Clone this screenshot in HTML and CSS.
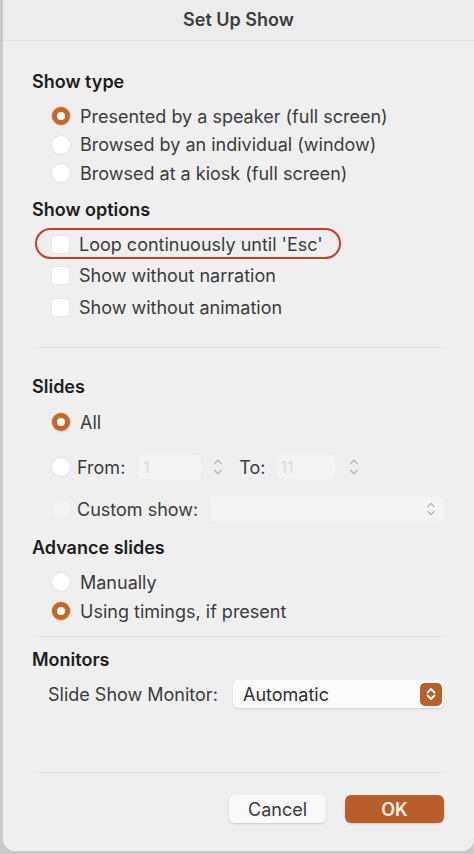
FILE: index.html
```html
<!DOCTYPE html>
<html>
<head>
  <meta charset="utf-8">
  <title>Set Up Show</title>
  <link rel="stylesheet" href="styles.css">
</head>
<body>
  <div class="win">
    <div class="win-title">Set Up Show</div>
    <div class="win-body">

      <div class="group">
        <div class="group-head">Show type</div>
        <div class="opts opts-radio">
          <label class="opt"><span class="radio on"></span>Presented by a speaker (full screen)</label>
          <label class="opt"><span class="radio"></span>Browsed by an individual (window)</label>
          <label class="opt"><span class="radio"></span>Browsed at a kiosk (full screen)</label>
        </div>
      </div>

      <div class="group group-opts">
        <div class="group-head">Show options</div>
        <div class="opts opts-check">
          <label class="opt opt-mark"><span class="check"></span>Loop continuously until 'Esc'<span class="ring"></span></label>
          <label class="opt"><span class="check"></span>Show without narration</label>
          <label class="opt"><span class="check"></span>Show without animation</label>
        </div>
      </div>

      <div class="sep sep-1"></div>

      <div class="group">
        <div class="group-head">Slides</div>
        <div class="slides">
          <label class="opt"><span class="radio on"></span>All</label>
          <div class="opt opt-range">
            <span class="radio"></span>From:
            <span class="field field-num">1</span>
            <span class="step"><svg width="10" height="22" viewBox="0 0 10 22"><path d="M1.5 8 5 4 8.5 8M1.5 14 5 18 8.5 14" fill="none" stroke="#b9b9b9" stroke-width="1.3"/></svg></span>
            <span class="to">To:</span>
            <span class="field field-num field-to">11</span>
            <span class="step step-to"><svg width="10" height="22" viewBox="0 0 10 22"><path d="M1.5 8 5 4 8.5 8M1.5 14 5 18 8.5 14" fill="none" stroke="#b9b9b9" stroke-width="1.3"/></svg></span>
          </div>
          <div class="opt opt-custom">
            <span class="radio faint"></span>Custom show:
            <span class="field field-pop"><svg width="10" height="18" viewBox="0 0 10 18"><path d="M1.5 7 5 3.5 8.5 7M1.5 11 5 14.5 8.5 11" fill="none" stroke="#b9b9b9" stroke-width="1.3"/></svg></span>
          </div>
        </div>
      </div>

      <div class="group group-adv">
        <div class="group-head">Advance slides</div>
        <div class="opts opts-radio opts-adv">
          <label class="opt"><span class="radio"></span>Manually</label>
          <label class="opt"><span class="radio on"></span>Using timings, if present</label>
        </div>
      </div>

      <div class="sep sep-2"></div>

      <div class="group">
        <div class="group-head">Monitors</div>
        <div class="monitor">
          <span class="monitor-label">Slide Show Monitor:</span>
          <span class="popup">Automatic
            <span class="popup-btn"><svg width="12" height="18" viewBox="0 0 12 18"><path d="M2.5 7.5 6 4 9.5 7.5M2.5 10.5 6 14 9.5 10.5" fill="none" stroke="#fff" stroke-width="1.8" stroke-linecap="round" stroke-linejoin="round"/></svg></span>
          </span>
        </div>
      </div>

      <div class="sep sep-3"></div>

      <div class="buttons">
        <button class="btn">Cancel</button>
        <button class="btn btn-ok">OK</button>
      </div>
    </div>
  </div>
</body>
</html>
```

FILE: styles.css
```css
html,
body {
  margin: 0;
  padding: 0;
}
body {
  width: 474px;
  height: 854px;
  background: #c9c9c9;
  font-family: Inter, "Liberation Sans", sans-serif;
  color: #3b3b3b;
  overflow: hidden;
}
.win {
  margin-left: 3px;
  width: 471px;
  height: 851px;
  background: #efefef;
  border-radius: 0 0 12px 12px;
  box-sizing: border-box;
}
.win-title {
  height: 40px;
  line-height: 40px;
  text-align: center;
  font-size: 18px;
  font-weight: 600;
  color: #3d3d3d;
  background: #ececec;
  border-bottom: 1px solid #e0e0e0;
}
.win-body {
  padding: 29px 30px 0 29px;
}
.group-head {
  font-size: 18px;
  font-weight: 600;
  color: #1d1d1d;
  height: 24px;
  line-height: 24px;
}
.opts {
  display: flex;
  flex-direction: column;
  padding-left: 20px;
}
.opts-radio {
  margin-top: 11px;
  gap: 6.5px;
}
.opts-adv {
  margin-top: 11px;
  gap: 7px;
}
.opt {
  display: flex;
  align-items: center;
  gap: 10px;
  height: 22px;
  font-size: 18px;
  color: #3c3c3c;
  white-space: nowrap;
  position: relative;
}
.radio {
  width: 18px;
  height: 18px;
  border-radius: 50%;
  background: #fff;
  box-shadow: 0 0 0 1px #e4e4e4;
  box-sizing: border-box;
  flex: none;
}
.radio.on {
  background: #fff;
  border: 5px solid #c3672d;
  box-shadow: 0 0 2px #d9884f;
}
.radio.faint {
  background: #f4f4f4;
  box-shadow: none;
}
.check {
  width: 17px;
  height: 17px;
  border-radius: 4px;
  background: #fff;
  box-shadow: 0 0 0 1px #e6e6e6;
  flex: none;
}
.group-opts {
  margin-top: 14px;
}
.opts-check {
  margin-top: 11px;
  gap: 9.5px;
}
.ring {
  position: absolute;
  left: -17px;
  top: -5px;
  width: 302px;
  height: 27px;
  border: 2px solid #c63b2b;
  border-radius: 16px;
}
.sep {
  height: 1px;
  background: #e1e1e1;
  margin-left: 3px;
}
.sep-1 {
  margin-top: 29px;
  margin-bottom: 27px;
}
.slides {
  display: flex;
  flex-direction: column;
  padding-left: 20px;
  margin-top: 12px;
}
.opt-range {
  margin-top: 23px;
  gap: 0;
}
.opt-range .radio {
  margin-right: 7px;
}
.field {
  height: 24px;
  background: #f4f4f4;
  border-radius: 4px;
  box-sizing: border-box;
  font-size: 16px;
  color: #dcdcdc;
  display: flex;
  align-items: center;
}
.field-num {
  width: 62px;
  margin-left: 14px;
  padding-left: 4px;
}
.field-to {
  width: 58px;
  margin-left: 11px;
}
.step {
  display: flex;
  margin-left: 12px;
}
.step-to {
  margin-left: 14px;
}
.to {
  margin-left: 16px;
}
.opt-custom {
  margin-top: 20px;
  gap: 0;
}
.opt-custom .radio {
  margin-right: 7px;
}
.field-pop {
  flex: 1;
  margin-left: 12px;
  justify-content: flex-end;
  padding-right: 8px;
}
.group-adv {
  margin-top: 16px;
}
.sep-2 {
  margin-top: 14px;
  margin-bottom: 11px;
}
.monitor {
  display: flex;
  align-items: center;
  margin-top: 8px;
  padding-left: 16px;
  font-size: 18px;
}
.monitor-label {
  width: 185px;
  color: #3c3c3c;
}
.popup {
  flex: 1;
  height: 28px;
  display: flex;
  align-items: center;
  justify-content: space-between;
  padding: 0 2px 0 10px;
  background: #fbfbfb;
  border-radius: 5px;
  box-shadow: 0 1px 2px rgba(0, 0, 0, 0.12);
  color: #2f2f2f;
}
.popup-btn {
  width: 22px;
  height: 23px;
  border-radius: 5px;
  background: #b9602a;
  display: flex;
  align-items: center;
  justify-content: center;
}
.sep-3 {
  margin-top: 64px;
}
.buttons {
  display: flex;
  justify-content: flex-end;
  gap: 19px;
  margin-top: 22px;
}
.btn {
  width: 97px;
  height: 28px;
  border: none;
  border-radius: 6px;
  background: #f9f9f9;
  box-shadow: 0 1px 2px rgba(0, 0, 0, 0.15);
  font-family: Inter, "Liberation Sans", sans-serif;
  font-size: 18px;
  color: #3a3a3a;
}
.btn-ok {
  width: 99px;
  background: #b95e2b;
  color: #fff3e8;
  font-weight: 600;
}
```
